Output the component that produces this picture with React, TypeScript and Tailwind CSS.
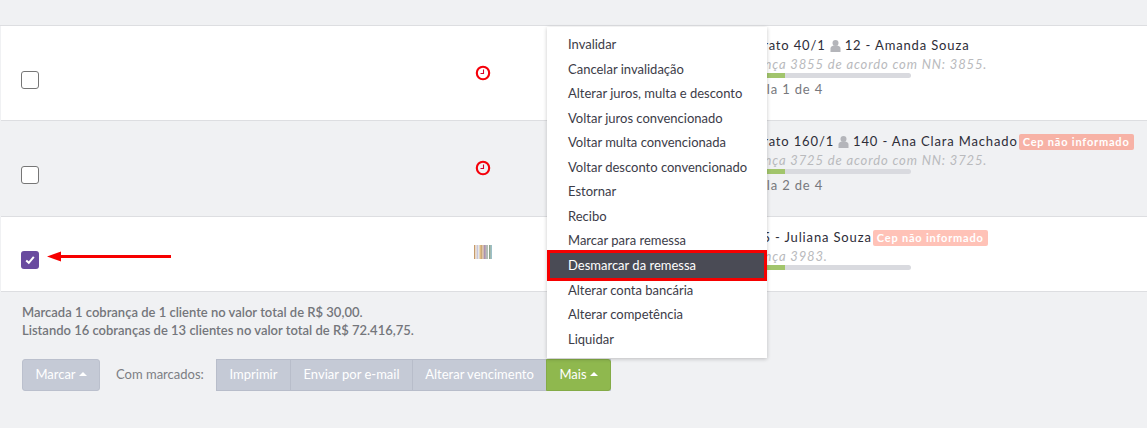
const font = { fontFamily: "Lato, 'Noto Sans', sans-serif" };

function Clock() {
  return (
    <svg width="16" height="16" viewBox="0 0 16 16" fill="none">
      <circle cx="8" cy="8" r="6.2" stroke="#f5000a" strokeWidth="2.1" />
      <path d="M8.5 4.5V8.5H5.5" stroke="#d4002a" strokeWidth="1.1" />
    </svg>
  );
}

function Barcode() {
  const bars = ["#c59a6a", "#e8d9c8", "#c7c6dc", "#dfe3ea", "#e0b875", "#c9a77a", "#d8b893", "#a993b3", "#b7a0ad", "#93a59a", "#fff", "#6f8a6c", "#9cc0c8"];
  return (
    <svg width="18" height="14" viewBox="0 0 18 14">
      {bars.map((c, i) => (
        <rect key={i} x={(i * 18) / 13} y="0" width={18 / 13} height="14" fill={c} />
      ))}
    </svg>
  );
}

function Badge({ light }: { light?: boolean }) {
  return (
    <span className={`inline-flex items-center justify-center h-[16px] w-[115px] ml-px rounded-[2px] text-white text-[11px] font-bold tracking-[0.8px] ${light ? "bg-[#ffc2b7]" : "bg-[#f7b2a6]"}`}>
      Cep não informado
    </span>
  );
}

function Caret() {
  return <span className="inline-block ml-[3px] mb-[2px] w-0 h-0 border-x-[4px] border-x-transparent border-b-[4px] border-b-white" />;
}

function Progress() {
  return (
    <div className="w-[199px] h-[5px] rounded-full bg-[#d9dadf] overflow-hidden">
      <div className="w-[73px] h-full bg-[#a2c56c]" />
    </div>
  );
}

function User() {
  return (
    <svg width="11" height="12" viewBox="0 0 11 12" className="mx-[4px]" fill="#b4b5ba">
      <circle cx="5.5" cy="3" r="3" />
      <path d="M0.5 12V8.5C0.5 7 2 6 3.5 5.6H7.5C9 6 10.5 7 10.5 8.5V12Z" />
    </svg>
  );
}

function Row({
  h, bg, box, icon, iconTop, boxTop, children,
}: {
  h: string; bg: string; box: React.ReactNode; icon: React.ReactNode; iconTop: string; boxTop: string; children: React.ReactNode;
}) {
  return (
    <div className={`flex ${h} ${bg} border-b border-[#dddee1] ml-px`}>
      <div className={`w-[473px] pl-[20px] ${boxTop}`}>{box}</div>
      <div className={`w-[238px] ${iconTop}`}>{icon}</div>
      <div className="flex-1">{children}</div>
    </div>
  );
}

const emptyBox = <div className="w-[18px] h-[18px] rounded-[3px] border border-[#767676] bg-white" />;
const checkedBox = (
  <div className="w-[18px] h-[18px] rounded-[3px] bg-[#694b9f] flex items-center justify-center">
    <svg width="10" height="9" viewBox="0 0 10 9" fill="none">
      <path d="M1.2 4.4L3.8 6.8L8.8 0.8" stroke="#fff" strokeWidth="2" />
    </svg>
  </div>
);

const items = [
  "Invalidar", "Cancelar invalidação", "Alterar juros, multa e desconto", "Voltar juros convencionado",
  "Voltar multa convencionada", "Voltar desconto convencionado", "Estornar", "Recibo", "Marcar para remessa",
];
const items2 = ["Alterar conta bancária", "Alterar competência", "Liquidar"];

function Line({ children }: { children: React.ReactNode }) {
  return <div className="flex items-center h-[18px] ml-[20px] text-[13px] tracking-[0.85px] text-[#2d2d38] whitespace-nowrap">{children}</div>;
}
function Note({ children }: { children: React.ReactNode }) {
  return <div className="h-[18px] leading-[18px] ml-[16px] text-[13px] italic tracking-[0.85px] text-[#b9babd] whitespace-nowrap">{children}</div>;
}
function Parcela({ children }: { children: React.ReactNode }) {
  return <div className="mt-[2px] h-[18px] leading-[18px] ml-[19px] text-[13px] tracking-[0.85px] text-[#77787d] whitespace-nowrap">{children}</div>;
}

export default function App() {
  return (
    <div style={font} className="relative w-[1147px] h-[428px] overflow-hidden bg-[#f0f1f3]">
      <div className="h-[25px] border-b-[1px] border-[#dddee1] pl-[720px] text-[13px] leading-none text-[#555] -mt-[12px] box-content pt-[12px]">
        <span className="block pl-[66px] -mt-[13px]">p</span>
      </div>

      <Row h="h-[95px]" bg="bg-white" box={emptyBox} icon={<Clock />} boxTop="pt-[45px]" iconTop="pt-[39px] pl-[1px]">
        <div className="pt-[11px]">
          <Line>Contrato 40/1<User />12 - Amanda Souza</Line>
          <Note>Cobrança 3855 de acordo com NN: 3855.</Note>
          <Progress />
          <Parcela>Parcela 1 de 4</Parcela>
        </div>
      </Row>

      <Row h="h-[96px]" bg="bg-[#f0f1f3]" box={emptyBox} icon={<Clock />} boxTop="pt-[45px]" iconTop="pt-[39px] pl-[1px]">
        <div className="pt-[12px]">
          <Line>Contrato 160/1<User />140 - Ana Clara Machado<Badge /></Line>
          <Note>Cobrança 3725 de acordo com NN: 3725.</Note>
          <Progress />
          <Parcela>Parcela 2 de 4</Parcela>
        </div>
      </Row>

      <Row h="h-[75px]" bg="bg-white" box={checkedBox} icon={<Barcode />} boxTop="pt-[34px]" iconTop="pt-[28px]">
        <div className="pt-[12px]">
          <Line><span className="w-[3px]" /><User />15 - Juliana Souza<Badge light /></Line>
          <Note>Cobrança 3983.</Note>
          <Progress />
        </div>
      </Row>

      <div className="pl-[22px] pt-[11px] text-[13px] leading-[18px] font-semibold text-[#74767b]">
        <div>Marcada 1 cobrança de 1 cliente no valor total de R$ 30,00.</div>
        <div>Listando 16 cobranças de 13 clientes no valor total de R$ 72.416,75.</div>
      </div>

      <div className="flex items-center mt-[20px] ml-[22px] h-[32px] text-[13px] text-white">
        <div className="w-[78px] h-full flex items-center justify-center bg-[#c5cad6] border border-[#bbc0cd] rounded-[3px]">Marcar<Caret /></div>
        <span className="ml-[16px] w-[100px] text-[#7c7e83]">Com marcados:</span>
        <div className="flex h-full bg-[#c5cad6]">
          <div className="w-[75px] h-full flex items-center justify-center border border-[#b8bdca]">Imprimir</div>
          <div className="w-[122px] h-full flex items-center justify-center border-y border-r border-[#b8bdca]">Enviar por e-mail</div>
          <div className="w-[133px] h-full flex items-center justify-center border-y border-[#b8bdca]">Alterar vencimento</div>
          <div className="w-[65px] h-full flex items-center justify-center bg-[#8fb84e] border border-[#84ab46] rounded-r-[3px]">Mais<Caret /></div>
        </div>
      </div>

      <div className="absolute left-[547px] top-[27px] w-[220px] h-[331px] bg-white shadow-[0_1px_4px_rgba(0,0,0,0.22)] pt-[5px] text-[13px] text-[#3c3c48]">
        {items.map((t) => (
          <div key={t} className="h-[24.5px] leading-[24.5px] pl-[21px] whitespace-nowrap">{t}</div>
        ))}
        <div className="h-[31px] -my-[3px] relative z-10 border-[3px] border-[#f60000] bg-[#4a4b55] text-white leading-[25px] pl-[18px]">Desmarcar da remessa</div>
        {items2.map((t) => (
          <div key={t} className="h-[24.5px] leading-[24.5px] pl-[21px] whitespace-nowrap">{t}</div>
        ))}
      </div>

      <svg className="absolute left-[46px] top-[251px]" width="126" height="11" viewBox="0 0 126 11">
        <path d="M1 5.5L15 0.5V4H125V7H15V10.5Z" fill="#f60000" />
      </svg>
    </div>
  );
}
